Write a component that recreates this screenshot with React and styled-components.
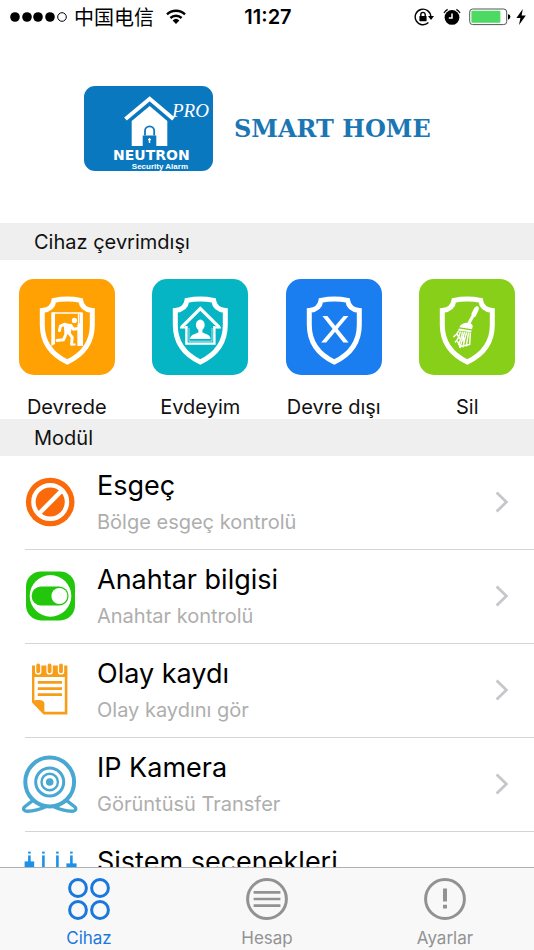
import styled, { createGlobalStyle } from "styled-components";

const GlobalStyle = createGlobalStyle`
  body {
    margin: 0;
    background: #fff;
    color: #111;
    font-family: Inter, "Liberation Sans", "Noto Sans CJK SC", sans-serif;
  }

  * {
    box-sizing: border-box;
  }
`;

const Screen = styled.div`
  display: flex;
  flex-direction: column;
  height: 100vh;
`;

const StatusBar = styled.div`
  display: grid;
  grid-template-columns: 1fr auto 1fr;
  align-items: center;
  flex: none;
  height: 34px;
  padding: 0 8px 0 10px;
  color: #000;
  font-size: 20px;
  line-height: 24px;
`;

const StatusGroup = styled.div`
  display: flex;
  align-items: center;
  justify-content: ${({ $end }) => ($end ? "flex-end" : "flex-start")};
  gap: ${({ $end }) => ($end ? "8px" : "6px")};
`;

const Power = styled.div`
  display: flex;
  align-items: center;
  gap: 5px;
`;

const Carrier = styled.span`
  margin-right: 6px;
  font-family: "Noto Sans CJK SC", sans-serif;
`;

const Clock = styled.time`
  font-weight: 600;
`;

const Content = styled.main`
  flex: 1;
  min-height: 0;
  overflow-y: auto;
  scrollbar-width: none;
`;

const Brand = styled.header`
  display: flex;
  align-items: center;
  gap: 21px;
  padding: 52px 16px 52px 84px;
`;

const BrandName = styled.h1`
  margin: 0;
  color: #1b76b4;
  font-family: "DejaVu Serif", serif;
  font-size: 24px;
  font-weight: 700;
  line-height: 28px;
  white-space: nowrap;
`;

const SectionTitle = styled.h2`
  margin: 0;
  padding: 7px 34px 6px;
  background: #efefef;
  font-size: 20px;
  font-weight: 400;
  line-height: 24px;
`;

const Modes = styled.div`
  display: grid;
  grid-template-columns: repeat(4, 1fr);
  padding-top: 19px;
`;

const ModeButton = styled.button`
  display: flex;
  flex-direction: column;
  align-items: center;
  gap: 20px;
  padding: 0;
  border: 0;
  background: none;
  color: inherit;
  font: inherit;
  font-size: 20px;
  line-height: 24px;
  white-space: nowrap;
`;

const ModeTile = styled.svg`
  width: 96px;
  height: 96px;
  border-radius: 15px;
  background: ${({ $color }) => $color};
`;

const ModuleList = styled.ul`
  margin: 0;
  padding: 0 0 0 25px;
  list-style: none;
`;

const ModuleLink = styled.a`
  display: flex;
  align-items: center;
  gap: 22px;
  height: 94px;
  padding: 0 25px 2px 0;
  border-bottom: 1px solid #d4d4d6;
  color: inherit;
  text-decoration: none;
`;

const ModuleIcon = styled.svg`
  flex: none;
  width: 50px;
  height: 60px;
  overflow: visible;
`;

const ModuleText = styled.div`
  flex: 1;
  min-width: 0;
`;

const ModuleName = styled.div`
  color: #000;
  font-size: 27px;
  line-height: 36px;
`;

const ModuleHint = styled.div`
  margin-top: 4px;
  color: #aeaeae;
  font-size: 20px;
  line-height: 28px;
`;

const TabBar = styled.nav`
  display: grid;
  grid-template-columns: repeat(3, 1fr);
  flex: none;
  padding: 10px 0 2px;
  border-top: 1px solid #b0b0b0;
  background: #f8f8f9;
`;

const Tab = styled.a`
  display: flex;
  flex-direction: column;
  align-items: center;
  gap: 8px;
  color: ${({ $active }) => ($active ? "#1a78dc" : "#929292")};
  font-size: 17px;
  line-height: 20px;
  text-decoration: none;
`;

const Signal = () => (
  <svg width="58" height="10" viewBox="0 0 58 10" aria-hidden="true">
    {[5, 17, 28, 40].map((x) => (
      <circle key={x} cx={x} cy="5" r="4.8" />
    ))}
    <circle cx="52" cy="5" r="4.3" fill="none" stroke="#000" />
  </svg>
);

const Wifi = () => (
  <svg width="20" height="16" viewBox="0 0 20 16" aria-hidden="true">
    <g fill="none" stroke="#000" strokeWidth="2.4">
      <path d="M1 5.4A13 13 0 0 1 19 5.4" />
      <path d="M4.4 9A8.2 8.2 0 0 1 15.6 9" />
    </g>
    <path d="M6.6 11.4A5 5 0 0 1 13.4 11.4L10 15Z" />
  </svg>
);

const RotationLock = () => (
  <svg width="21" height="18" viewBox="0 0 21 18" aria-hidden="true">
    <g fill="none" stroke="#000" strokeWidth="1.4">
      <path d="M14.4 14.6A7.8 7.8 0 1 1 16.8 8.6" />
      <path d="M6.8 8.5V6.6a2.2 2.2 0 0 1 4.4 0V8.5" />
    </g>
    <rect x="5.4" y="8" width="7.2" height="5.2" rx=".6" />
    <path d="M14 8H20L17 12Z" />
  </svg>
);

const Alarm = () => (
  <svg width="18" height="18" viewBox="0 0 18 18" aria-hidden="true">
    <circle cx="9" cy="9.4" r="7.4" />
    <path
      d="M1 5A9 9 0 0 1 4.6 1.4M17 5A9 9 0 0 0 13.4 1.4"
      fill="none"
      stroke="#000"
      strokeWidth="1.2"
    />
    <path d="M9 5.4V10H5.8" fill="none" stroke="#fff" strokeWidth="1.5" />
  </svg>
);

const Battery = () => (
  <svg width="42" height="18" viewBox="0 0 42 18" aria-hidden="true">
    <rect x=".7" y="1" width="37" height="15.6" rx="3" fill="#fff" stroke="#555" />
    <rect x="2.4" y="2.8" width="29" height="12" rx="1" fill="#4cd964" />
    <path d="M39 6.2Q41.4 6.4 41.4 8.8T39 11.4Z" />
  </svg>
);

const Bolt = () => (
  <svg width="10" height="16" viewBox="0 0 10 16" aria-hidden="true">
    <path d="M6.8 0L.4 9H4.4L3 16L9.8 6.6H5.6Z" />
  </svg>
);

const Logo = () => (
  <svg width="129" height="85" viewBox="0 0 129 85" role="img" aria-label="Neutron">
    <rect width="129" height="85" rx="11" fill="#0a78bf" />
    <path d="M41.5 33L65.7 12.8L89.5 33" fill="none" stroke="#fff" strokeWidth="4" />
    <path d="M65.7 20L83.3 35V60H47.7V35Z" fill="#fff" />
    <rect x="58.7" y="49.5" width="13.6" height="10.5" fill="#0a78bf" />
    <path
      d="M61 49.5V45a4.6 4.6 0 0 1 9.2 0V49.5"
      fill="none"
      stroke="#0a78bf"
      strokeWidth="1.8"
    />
    <path d="M65.5 52V57M64 53.6H67" stroke="#fff" strokeWidth="1.4" />
    <g fill="#fff">
      <text x="88" y="31" fontFamily="Liberation Serif, serif" fontStyle="italic" fontSize="19">
        PRO
      </text>
      <text
        x="29"
        y="74"
        fontFamily="DejaVu Sans, sans-serif"
        fontWeight="700"
        fontSize="14"
      >
        NEUTRON
      </text>
      <text
        x="104"
        y="83"
        textAnchor="end"
        fontFamily="Liberation Sans, sans-serif"
        fontWeight="700"
        fontSize="8"
      >
        Security Alarm
      </text>
    </g>
  </svg>
);

const Shield = () => (
  <path
    d="M35 21.4Q48.3 18.6 61.6 21.4C62.6 28 67 31 73.3 31.6V46C73.3 63 65 75 48.3 83C31.6 75 23.3 63 23.3 46V31.6C29.6 31 34 28 35 21.4Z"
    fill="none"
    stroke="#fff"
    strokeWidth="5"
  />
);

const RunningMan = () => (
  <g fill="#fff">
    <path d="M32.3 33.4H36V65L32.3 67ZM58.4 46L60.6 44V34H64V67H58.4Z" />
    <path d="M33 34H63.5M59.5 35V66" stroke="#fff" strokeWidth="1.3" />
    <circle cx="55.4" cy="41.4" r="2.6" />
    <path d="M44.6 43.8L53.4 45.6L51.6 55L45.4 54.6Z" />
    <g fill="none" stroke="#fff" strokeWidth="3" strokeLinecap="round" strokeLinejoin="round">
      <path d="M46 45.2L41.4 47.2L40.4 51.6M51.6 46.4L54.6 50.2L59 49.4" />
      <path d="M47.4 54L44.4 60.8L38 61.4M49.6 53.6L53.2 58.4L52.6 65" />
    </g>
    <path d="M51.4 64.6H56.6V66.6H51.4Z" />
  </g>
);

const HomePerson = () => (
  <g>
    <g fill="none" stroke="#fff">
      <path d="M29.4 48.4L48.3 29.6L67.4 48.4" strokeWidth="3.2" />
      <path d="M28 48.6H35.4M61.4 48.6H68.8" strokeWidth="1.8" />
      <path d="M34.4 47V64.6H62.4V47" strokeWidth="2.4" />
      <path d="M37 49V62.2H60V49" strokeWidth="0.6" />
    </g>
    <ellipse cx="48.3" cy="46" rx="4.4" ry="5.4" fill="#fff" />
    <path
      d="M46.4 49H50.4V53.4C54.4 55.2 58.4 55.6 58.6 60H38C38.4 55.6 42.4 55.2 46.4 53.4Z"
      fill="#fff"
    />
  </g>
);

const Cross = () => (
  <g fill="#fff">
    <path d="M36.4 37H41.4L62.6 63.6H57.4Z" />
    <path d="M62.4 37H57.6L35.2 63.6H40.2Z" />
  </g>
);

const Brush = () => (
  <g fill="#fff">
    <path d="M57.8 27C60 27.4 60.4 29 59.4 31.4L56.6 37.4L54.8 38.6L51.6 44.6C54.2 46 54 47.6 53 50.2L40.4 48.2C41.6 45.6 44.4 43.8 48.4 43.8L52.4 36.4L52.6 34.2L55.4 28.8Z" />
    <path d="M39.8 49.4L52.6 51.4L52.2 53.2L39 51.4Z" />
    <g fill="none" stroke="#fff" strokeWidth="1.5">
      <path d="M39.6 52Q37.6 56 34.4 58M41.4 52.4Q39.6 60 36 63.4M43.6 52.6Q42 61 39.4 65.6" />
      <path d="M45.6 53Q42.6 63 40.8 69M47.6 53.2Q45 62 44 68.4M49.6 53.4L47.2 67.4M51.4 53.6L50.6 66" />
      <path d="M38.4 62L41 67.6L50.6 65.4M38 55L41 60M44 57L45.4 63" />
    </g>
  </g>
);

const BypassIcon = () => (
  <>
    <circle cx="25.2" cy="30" r="24.3" fill="#fb6a0a" />
    <circle cx="25.2" cy="30" r="16.8" fill="none" stroke="#fff" strokeWidth="4.4" />
    <path d="M14.6 41L36 19.4" stroke="#fff" strokeWidth="4.4" />
  </>
);

const SwitchIcon = () => (
  <>
    <rect x="1" y="5.4" width="49" height="49" rx="15" fill="#22c70c" />
    <circle cx="25.5" cy="29.9" r="20.8" fill="#fff" />
    <rect x="6.6" y="20.6" width="37" height="18.8" rx="9.4" fill="#22c70c" />
    <circle cx="34.4" cy="30" r="8" fill="#fff" />
  </>
);

const NotepadIcon = () => (
  <>
    <path
      d="M7 5.4H42.4V54.4H18.6L7 42.6ZM9.4 17V40.6C14.6 39.4 20 40.4 19.4 44.4V51.8H39.8V17Z"
      fill="#f79d18"
      fillRule="evenodd"
    />
    {[13.2, 24.6, 36].map((x) => (
      <g key={x}>
        <rect x={x - 3.2} y="2" width="6.4" height="12.6" rx="3.2" fill="#fff" />
        <rect x={x - 1.9} y="3.6" width="3.8" height="9.6" rx="1.9" fill="#f79d18" />
      </g>
    ))}
    <path d="M12.8 22.4H37M12.8 28.6H37M12.8 34.6H37" stroke="#f79d18" strokeWidth="2.8" />
  </>
);

const CameraIcon = () => (
  <>
    <g fill="none" stroke="#48a8d2" strokeLinejoin="round">
      <path
        d="M8 46.4L-.6 53C-2.4 55.4 -.6 57.2 2.4 57.2C9 57.2 15 55.6 21 52.6M41.4 46.4L50 53C51.8 55.4 50 57.2 47 57.2C40.4 57.2 34.4 55.6 28.4 52.6"
        strokeWidth="3.4"
      />
      <circle cx="24.7" cy="28" r="24.4" fill="#fff" strokeWidth="4" />
      <circle cx="24.7" cy="28" r="14" strokeWidth="3" />
      <circle cx="24.7" cy="28" r="8.2" strokeWidth="2.4" />
    </g>
    <circle cx="24.7" cy="28" r="3.8" fill="#48a8d2" />
  </>
);

const SlidersIcon = () => (
  <g fill="#1b92ea">
    {[4.4, 18.4, 32.4, 46.4].map((x) => (
      <g key={x}>
        <rect x={x - 1.3} y="3.6" width="2.6" height="2" />
        <rect x={x - 1.3} y="7.4" width="2.6" height="48" />
      </g>
    ))}
    <rect x="-.4" y="13.4" width="9.6" height="7" />
    <rect x="13.6" y="34" width="9.6" height="7" />
    <rect x="27.6" y="26" width="9.6" height="7" />
    <rect x="41.4" y="15.4" width="10.2" height="7" />
  </g>
);

const Chevron = () => (
  <svg width="14" height="22" viewBox="0 0 14 22" aria-hidden="true">
    <path d="M1.6 1.4L11.4 11L1.6 20.6" fill="none" stroke="#c6c6cb" strokeWidth="2.8" />
  </svg>
);

const GridIcon = () => (
  <g>
    <circle cx="10" cy="10" r="8.4" />
    <circle cx="32" cy="10" r="8.4" />
    <circle cx="10" cy="32" r="8.4" />
    <circle cx="32" cy="32" r="8.4" />
  </g>
);

const AccountIcon = () => (
  <g>
    <circle cx="21" cy="21" r="19.4" />
    <path d="M7.6 14.4H34.4M7.6 21H34.4M7.6 27.6H34.4" strokeWidth="2.6" />
  </g>
);

const SettingsIcon = () => (
  <g>
    <circle cx="21" cy="21" r="19.4" />
    <path d="M21 10.6V23.6M21 26.8V30.4" strokeWidth="4" />
  </g>
);

const modes = [
  { label: "Devrede", color: "#ffa003", Icon: RunningMan },
  { label: "Evdeyim", color: "#06b5c3", Icon: HomePerson },
  { label: "Devre dışı", color: "#1a7ef0", Icon: Cross },
  { label: "Sil", color: "#87cf18", Icon: Brush },
];

const modules = [
  { name: "Esgeç", hint: "Bölge esgeç kontrolü", Icon: BypassIcon },
  { name: "Anahtar bilgisi", hint: "Anahtar kontrolü", Icon: SwitchIcon },
  { name: "Olay kaydı", hint: "Olay kaydını gör", Icon: NotepadIcon },
  { name: "IP Kamera", hint: "Görüntüsü Transfer", Icon: CameraIcon },
  { name: "Sistem seçenekleri", hint: "", Icon: SlidersIcon },
];

const tabs = [
  { label: "Cihaz", Icon: GridIcon, active: true },
  { label: "Hesap", Icon: AccountIcon },
  { label: "Ayarlar", Icon: SettingsIcon },
];

const App = () => (
  <>
    <GlobalStyle />
    <Screen>
      <StatusBar>
        <StatusGroup>
          <Signal />
          <Carrier>中国电信</Carrier>
          <Wifi />
        </StatusGroup>
        <Clock>11:27</Clock>
        <StatusGroup $end>
          <RotationLock />
          <Alarm />
          <Power>
            <Battery />
            <Bolt />
          </Power>
        </StatusGroup>
      </StatusBar>
      <Content>
        <Brand>
          <Logo />
          <BrandName>SMART HOME</BrandName>
        </Brand>
        <SectionTitle>Cihaz çevrimdışı</SectionTitle>
        <Modes>
          {modes.map(({ label, color, Icon }) => (
            <ModeButton key={label} type="button">
              <ModeTile $color={color} viewBox="0 0 96 96" aria-hidden="true">
                <Shield />
                <Icon />
              </ModeTile>
              {label}
            </ModeButton>
          ))}
        </Modes>
        <SectionTitle>Modül</SectionTitle>
        <ModuleList>
          {modules.map(({ name, hint, Icon }) => (
            <li key={name}>
              <ModuleLink href="#">
                <ModuleIcon viewBox="0 0 50 60" aria-hidden="true">
                  <Icon />
                </ModuleIcon>
                <ModuleText>
                  <ModuleName>{name}</ModuleName>
                  <ModuleHint>{hint || "\u00a0"}</ModuleHint>
                </ModuleText>
                <Chevron />
              </ModuleLink>
            </li>
          ))}
        </ModuleList>
      </Content>
      <TabBar>
        {tabs.map(({ label, Icon, active }) => (
          <Tab key={label} href="#" $active={active}>
            <svg
              width="42"
              height="42"
              viewBox="0 0 42 42"
              fill="none"
              stroke="currentColor"
              strokeWidth="3"
              aria-hidden="true"
            >
              <Icon />
            </svg>
            {label}
          </Tab>
        ))}
      </TabBar>
    </Screen>
  </>
);

export default App;
